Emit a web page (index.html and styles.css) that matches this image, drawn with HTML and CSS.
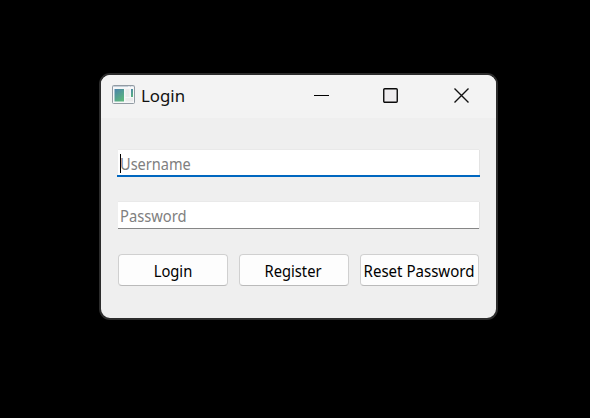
FILE: index.html
```
<!DOCTYPE html>
<html lang="en">
<head>
<meta charset="utf-8">
<title>Login</title>
<link rel="stylesheet" href="styles.css">
</head>
<body>
<main class="window">
  <header class="titlebar">
    <svg class="app-icon" width="23" height="19" viewBox="0 0 23 19">
      <defs><linearGradient id="screen" x1="0" y1="0" x2=".6" y2="1"><stop offset="0" stop-color="#4a82ab"/><stop offset="1" stop-color="#5bb57e"/></linearGradient></defs>
      <rect x=".5" y=".5" width="22" height="18" rx="1" fill="#f6f7f8" stroke="#929ba3"/>
      <path d="M1 1.500h21" stroke="#c3ced8"/>
      <path d="M16 2h2M19 2h2" stroke="#fff"/>
      <rect x="2.500" y="4" width="9.500" height="12.500" fill="url(#screen)"/>
      <path d="M13.500 4h4v8h-4zM13.500 13h7.500v3.500h-7.500z" fill="#ebebeb"/>
      <rect x="19" y="4" width="2" height="8" fill="url(#screen)"/>
    </svg>
    <h1 class="title"><span class="text">Login</span></h1>
    <div class="controls">
      <svg width="15" height="16" viewBox="0 0 15 16"><path d="M0 7.500h15" stroke="#000"/></svg>
      <svg class="maximize" width="15" height="16" viewBox="0 0 15 16"><rect x=".75" y=".75" width="13.500" height="13.500" rx="1" fill="#eeecee" stroke="#0a0a0a" stroke-width="1.400"/></svg>
      <svg width="15" height="16" viewBox="0 0 15 16"><path d="M.5.5l14 14M14.500.5l-14 14" stroke="#111" stroke-width="1.400"/></svg>
    </div>
  </header>
  <form class="form">
    <div class="field focused"><i class="caret"></i><span class="text">Username</span></div>
    <div class="field"><span class="text">Password</span></div>
    <div class="actions">
      <button type="button"><span class="text">Login</span></button>
      <button type="button"><span class="text">Register</span></button>
      <button type="button"><span class="text wide">Reset Password</span></button>
    </div>
  </form>
</main>
</body>
</html>
```
FILE: styles.css
```
* { box-sizing: border-box; }
body {
  margin: 0;
  padding: 73px 0 0 99px;
  height: 418px;
  overflow: hidden;
  background: #000;
  font-family: "Noto Sans", "Open Sans", sans-serif;
}
.window {
  width: 399px;
  height: 247px;
  border: 2px solid #2c2c2c;
  border-radius: 11px;
  background: #efefef;
  overflow: hidden;
}
.titlebar {
  display: flex;
  height: 43px;
  padding: 10px 27px 0 11px;
  background: #f3f3f3;
}
.text {
  display: inline-block;
  white-space: nowrap;
  transform: scaleX(.92);
  transform-origin: left center;
}
.title {
  margin: 0 0 0 6px;
  font-size: 17px;
  font-weight: 400;
  line-height: 22px;
  color: #111;
}
.title .text { transform: scaleX(.99); }
.controls {
  display: flex;
  gap: 55px;
  margin: 3px 0 0 auto;
}
.maximize { margin: 0 1px 0 -1px; }
.form { padding: 32px 17px 0; }
.field {
  display: flex;
  width: 361px;
  height: 27px;
  margin-bottom: 25px;
  padding: 1px 0 0 2px;
  background: #fff;
  box-shadow: 0 -1px #e9e9e9, 1px 0 #e3e3e3;
  border-bottom: 1px solid #868686;
  font-size: 16px;
  line-height: 27px;
  color: #808080;
}
.focused {
  border-bottom: 0;
  background: linear-gradient(#0067c0, #0067c0) bottom / 100% 2px no-repeat #fff;
  box-shadow: 0 -1px #e9e9e9, 1px 0 #e3e3e3;
  position: relative;
}
/* The accent line runs one pixel past both ends of the field. */
.focused::after {
  content: "";
  position: absolute;
  inset: auto -1px 0;
  height: 2px;
  background: #0067c0;
}
.focused .text { transform: scaleX(.91); }
.caret {
  width: 1px;
  height: 19px;
  margin: 3px -1px 0 0;
  background: #000;
}
.actions {
  display: grid;
  grid-template-columns: 110px 110px 119px;
  gap: 11px;
}
button {
  display: flex;
  align-items: center;
  justify-content: center;
  height: 32px;
  padding: 2px 1px 0 0;
  border: 1px solid #d0d0d0;
  border-bottom-color: #bababa;
  border-radius: 4px;
  background: #fdfdfd;
  font: 16px "Noto Sans", "Open Sans", sans-serif;
  color: #000;
}
button .text { transform-origin: center; }
button .wide { transform: scaleX(.94); }
```
